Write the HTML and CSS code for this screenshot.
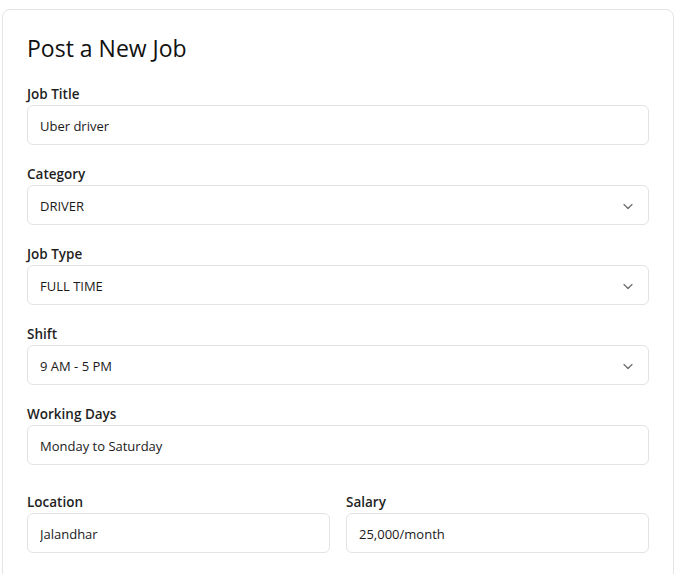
FILE: index.html
```html
<!DOCTYPE html>
<html>
<head>
<meta charset="utf-8">
<link rel="stylesheet" href="styles.css">
</head>
<body>
<div class="card">
  <h1 class="title">Post a New Job</h1>
  <div class="field">
    <label class="label">Job Title</label>
    <input class="control" type="text" value="Uber driver">
  </div>
  <div class="field">
    <label class="label">Category</label>
    <div class="control select"><span>DRIVER</span><svg class="chev" width="12" height="12" viewBox="0 0 12 12"><path d="M2 4.5l4 4 4-4" fill="none" stroke="#6b6b6b" stroke-width="1.2" stroke-linecap="round" stroke-linejoin="round"/></svg></div>
  </div>
  <div class="field">
    <label class="label">Job Type</label>
    <div class="control select"><span>FULL TIME</span><svg class="chev" width="12" height="12" viewBox="0 0 12 12"><path d="M2 4.5l4 4 4-4" fill="none" stroke="#6b6b6b" stroke-width="1.2" stroke-linecap="round" stroke-linejoin="round"/></svg></div>
  </div>
  <div class="field">
    <label class="label">Shift</label>
    <div class="control select"><span>9 AM - 5 PM</span><svg class="chev" width="12" height="12" viewBox="0 0 12 12"><path d="M2 4.5l4 4 4-4" fill="none" stroke="#6b6b6b" stroke-width="1.2" stroke-linecap="round" stroke-linejoin="round"/></svg></div>
  </div>
  <div class="field">
    <label class="label">Working Days</label>
    <input class="control" type="text" value="Monday to Saturday">
  </div>
  <div class="row">
    <div class="field">
      <label class="label">Location</label>
      <input class="control" type="text" value="Jalandhar">
    </div>
    <div class="field">
      <label class="label">Salary</label>
      <input class="control" type="text" value="25,000/month">
    </div>
  </div>
</div>
</body>
</html>
```
FILE: styles.css
```css
html, body {
  margin: 0;
  padding: 0;
  background: #ffffff;
}
body {
  padding: 9px 2px 0 2px;
  font-family: "Open Sans", "Noto Sans", sans-serif;
  color: #1a1a1a;
}
.card {
  width: 672px;
  box-sizing: border-box;
  border: 1px solid #e4e4e4;
  border-radius: 8px;
  padding: 24px 24px 60px 24px;
}
.title {
  margin: 0 0 22px 0;
  font-size: 23px;
  line-height: 29px;
  font-weight: 400;
  color: #111111;
}
.field {
  display: flex;
  flex-direction: column;
  margin-bottom: 20px;
}
.label {
  font-size: 13.5px;
  line-height: 19px;
  font-weight: 600;
  color: #1f1f1f;
  margin-bottom: 1px;
}
.control {
  box-sizing: border-box;
  height: 40px;
  width: 100%;
  border: 1px solid #e3e3e3;
  border-radius: 6px;
  padding: 1px 12px 0 12px;
  font-family: inherit;
  font-size: 13px;
  color: #1a1a1a;
  background: #ffffff;
  outline: none;
}
.select {
  display: flex;
  align-items: center;
  justify-content: space-between;
  padding-right: 14px;
}
.row {
  display: grid;
  grid-template-columns: 1fr 1fr;
  column-gap: 16px;
  padding-top: 8px;
}
```
